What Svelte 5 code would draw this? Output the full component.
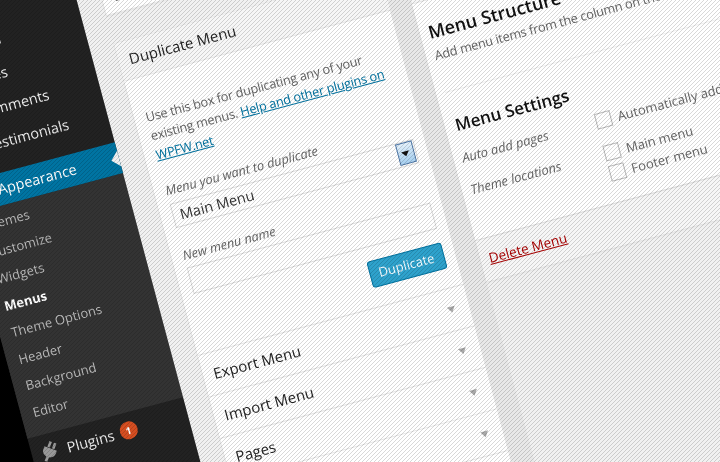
<script>
  const topItems = ['Media', 'Pages', 'Comments', 'Testimonials'];
  const subItems = ['Themes', 'Customize', 'Widgets', 'Menus', 'Theme Options', 'Header', 'Background', 'Editor'];
  const rows = ['Export Menu', 'Import Menu', 'Pages', 'Links'];
</script>

<div class="stage">
  <div class="scene">
    <aside class="sidebar">
      <ul class="top-list">
        {#each topItems as item}
          <li class="top-item">{item}</li>
        {/each}
      </ul>
      <div class="active">Appearance<span class="notch"></span></div>
      <ul class="sub-list">
        {#each subItems as item}
          <li class="sub-item" class:current={item === 'Menus'}>{item}</li>
        {/each}
      </ul>
      <div class="plugins">
        <svg class="plug" viewBox="0 0 20 20" aria-hidden="true">
          <path d="M6.6 1H9V6.5H6.6Z M11 1H13.4V6.5H11Z M4 7H16V10C16 12.8 13.6 14.8 11.3 15V19.5H8.7V15C6.4 14.8 4 12.8 4 10Z" />
        </svg>
        <span>Plugins</span>
        <span class="badge">1</span>
      </div>
    </aside>

    <main class="content">
      <section class="left-col">
        <div class="stub"><span class="stub-text">Links</span></div>
        <div class="panel dup">
          <h3 class="panel-head">Duplicate Menu</h3>
          <div class="panel-body">
            <p class="intro">Use this box for duplicating any of your existing menus. <a href="#help">Help and other plugins on WPFW.net</a></p>
            <div class="field-label first">Menu you want to duplicate</div>
            <div class="select">
              <span>Main Menu</span>
              <span class="drop"><span class="drop-arrow"></span></span>
            </div>
            <div class="field-label second">New menu name</div>
            <div class="input"></div>
            <div class="actions"><button class="btn">Duplicate</button></div>
          </div>
          {#each rows as row}
            <div class="acc-row"><span>{row}</span><span class="tri"></span></div>
          {/each}
        </div>
      </section>

      <div class="gutter"></div>

      <section class="right-col">
        <div class="menu-head"></div>
        <div class="menu-body">
          <h3 class="structure">Menu Structure</h3>
          <p class="hint">Add menu items from the column on the left.</p>
          <div class="settings">
            <h3 class="settings-title">Menu Settings</h3>
            <div class="settings-grid">
              <div class="set-label auto">Auto add pages</div>
              <div class="set-options auto">
                <label class="opt"><span class="cb"></span>Automatically add new top-level pages to this menu</label>
              </div>
              <div class="set-label">Theme locations</div>
              <div class="set-options">
                <label class="opt"><span class="cb"></span>Main menu</label>
                <label class="opt"><span class="cb"></span>Footer menu</label>
              </div>
            </div>
          </div>
        </div>
        <div class="menu-foot"><a href="#delete">Delete Menu</a></div>
      </section>
    </main>
  </div>
  <div class="stripes"></div>
</div>

<style>
  :global(body) { margin: 0; background: #000; }

  .stage {
    position: relative;
    width: 720px;
    height: 462px;
    overflow: hidden;
    background: #000;
    font-family: "Open Sans", "Noto Sans", sans-serif;
  }

  .scene {
    display: flex;
    width: 1100px;
    height: 800px;
    transform-origin: 0 0;
    transform: rotate(-15deg) translate(-87px, -20px);
  }

  .stripes {
    position: absolute;
    inset: 0;
    pointer-events: none;
    mix-blend-mode: multiply;
    background-image: linear-gradient(135deg, #fff 44%, #d8d8d8 44% 56%, #fff 56%);
    background-size: 4px 4px;
  }

  /* sidebar */
  .sidebar {
    flex: 0 0 160.5px;
    display: flex;
    flex-direction: column;
    background: #222;
    padding-top: 40px;
    box-sizing: border-box;
    color: #eee;
    font-size: 14.5px;
  }
  .top-list, .sub-list { list-style: none; margin: 0; padding: 0; }
  .top-list { margin-bottom: 13px; }
  .top-item {
    height: 33.5px;
    line-height: 33.5px;
    padding-left: 36px;
  }
  .active {
    position: relative;
    height: 32px;
    line-height: 32px;
    padding-left: 36px;
    background: #0074a2;
    color: #fff;
  }
  .notch {
    position: absolute;
    right: 0;
    top: 8.5px;
    border: 8px solid transparent;
    border-left-width: 0;
    border-right: 8px solid #f1f1f1;
  }
  .sub-list {
    background: #333;
    height: 232px;
    padding-top: 2px;
    box-sizing: border-box;
    font-size: 13px;
    color: #bbb;
  }
  .sub-item {
    height: 27.5px;
    line-height: 27.5px;
    padding-left: 12px;
  }
  .sub-item.current { color: #fff; font-weight: 700; }
  .plugins {
    display: flex;
    align-items: center;
    height: 36px;
    padding-left: 7px;
  }
  .plugins span:first-of-type { margin-left: 7px; }
  .plug { width: 22px; height: 22px; fill: #999; transform: rotate(35deg); }
  .badge {
    width: 18px;
    height: 18px;
    margin-left: 6px;
    border-radius: 50%;
    background: #d54e21;
    color: #fff;
    font-size: 10px;
    font-weight: 700;
    line-height: 18px;
    text-align: center;
  }

  /* content */
  .content {
    flex: 1;
    display: flex;
    background: #f1f1f1;
    padding-left: 24px;
    color: #222;
  }
  .left-col { flex: 0 0 277px; display: flex; flex-direction: column; }
  .gutter { flex: 0 0 22px; background: #e8e8e8; }
  .right-col { flex: 0 0 560px; display: flex; flex-direction: column; align-self: flex-start; box-shadow: 0 1px 2px rgba(0,0,0,.08); }

  .stub {
    height: 63px;
    box-sizing: border-box;
    background: #fff;
    border: 1px solid #e5e5e5;
    box-shadow: 0 1px 1px rgba(0,0,0,.05);
    padding: 32px 0 0 12px;
    font-size: 15px;
    line-height: 24px;
  }
  .panel {
    margin-top: 28px;
    background: #fff;
    border: 1px solid #e5e5e5;
    box-sizing: border-box;
    flex: 1;
  }
  .panel-head {
    margin: 0;
    height: 39px;
    box-sizing: border-box;
    padding-left: 11px;
    background: #f6f6f6;
    border-bottom: 1px solid #e5e5e5;
    font-size: 15px;
    font-weight: 400;
    line-height: 36px;
    color: #222;
  }
  .panel-body { padding: 31px 11px 19px 12px; border-bottom: 1px solid #e5e5e5; }
  .intro {
    margin: 0;
    font-size: 12.8px;
    letter-spacing: -0.25px;
    line-height: 19.3px;
    color: #666;
  }
  .intro a { color: #0074a2; }
  .field-label {
    font-size: 12.8px;
    font-style: italic;
    line-height: 19px;
    color: #666;
  }
  .first { margin-top: 18px; }
  .second { margin-top: 19px; }
  .select {
    display: flex;
    align-items: center;
    justify-content: space-between;
    box-sizing: border-box;
    height: 25px;
    margin-top: 4px;
    padding: 0 1px 0 7px;
    border: 1px solid #ddd;
    background: #fff;
    font-size: 14.5px;
    color: #333;
  }
  .drop {
    display: flex;
    align-items: center;
    justify-content: center;
    box-sizing: border-box;
    width: 17px;
    height: 22px;
    border: 1px solid #4a76a8;
    background: linear-gradient(#e4f1fb, #a6d0f1);
  }
  .drop-arrow {
    border-left: 4.5px solid transparent;
    border-right: 4.5px solid transparent;
    border-top: 5px solid #111;
  }
  .input {
    height: 27px;
    box-sizing: border-box;
    margin-top: 3px;
    border: 1px solid #ddd;
    background: #fff;
  }
  .actions { display: flex; justify-content: flex-end; margin-top: 14px; }
  .btn {
    width: 77px;
    height: 27px;
    padding: 0;
    border: 1px solid #0074a2;
    border-radius: 3px;
    background: #2ea2cc;
    color: #f4fbff;
    font-family: inherit;
    font-size: 13px;
    line-height: 24px;
  }
  .acc-row {
    display: flex;
    align-items: center;
    justify-content: space-between;
    height: 43px;
    box-sizing: border-box;
    padding: 0 14px 0 11px;
    border-bottom: 1px solid #e5e5e5;
    font-size: 15px;
    color: #222;
  }
  .tri {
    border-left: 4px solid transparent;
    border-right: 4px solid transparent;
    border-top: 6px solid #a8a8a8;
  }

  /* right panel */
  .menu-head {
    height: 131px;
    box-sizing: border-box;
    background: #f6f6f6;
    border-bottom: 1px solid #e5e5e5;
  }
  .menu-body { height: 244px; box-sizing: border-box; background: #fff; padding: 19px 9px 0; }
  .structure {
    margin: 0;
    font-size: 18px;
    font-weight: 600;
    line-height: 24px;
    color: #111;
  }
  .settings-title {
    margin: 0;
    padding-left: 2px;
    font-size: 17px;
    font-weight: 600;
    line-height: 24px;
    color: #111;
  }
  .hint {
    margin: 3px 0 0;
    font-size: 12.8px;
    letter-spacing: -0.25px;
    line-height: 19px;
    color: #666;
  }
  .settings {
    margin-top: 28px;
    border-top: 1px solid #eee;
    padding-top: 22px;
    margin-left: 0;
  }
  .settings-grid {
    display: grid;
    grid-template-columns: 138px 1fr;
    margin-top: 10px;
    font-size: 13px;
    color: #666;
  }
  .set-label { font-style: italic; line-height: 19px; padding-top: 2px; }
  .set-label.auto { height: 31px; }
  .set-options.auto { height: 31px; }
  .opt { display: flex; align-items: center; height: 21.5px; gap: 7px; white-space: nowrap; }
  .cb {
    flex: 0 0 16px;
    box-sizing: border-box;
    height: 16px;
    border: 1px solid #bbb;
    background: #fff;
  }
  .menu-foot {
    height: 43px;
    box-sizing: border-box;
    padding: 11px 9px 0;
    background: #f6f6f6;
    border-top: 1px solid #ddd;
    font-size: 13.5px;
    line-height: 19px;
  }
  .menu-foot a { color: #a00; }
</style>
